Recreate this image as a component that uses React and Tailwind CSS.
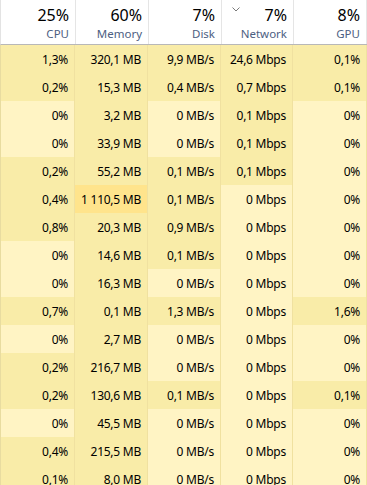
import React from "react";

const columns = [
    { pct: "25%", label: "CPU" },
    { pct: "60%", label: "Memory" },
    { pct: "7%", label: "Disk" },
    { pct: "7%", label: "Network", sorted: true },
    { pct: "8%", label: "GPU" },
];

// heat: 0 = light, 1 = dark, 2 = highlighted
const rows = [
    [["1,3%", 1], ["320,1 MB", 1], ["9,9 MB/s", 1], ["24,6 Mbps", 1], ["0,1%", 1]],
    [["0,2%", 1], ["15,3 MB", 1], ["0,4 MB/s", 1], ["0,7 Mbps", 1], ["0,1%", 1]],
    [["0%", 0], ["3,2 MB", 1], ["0 MB/s", 0], ["0,1 Mbps", 1], ["0%", 0]],
    [["0%", 0], ["33,9 MB", 1], ["0 MB/s", 0], ["0,1 Mbps", 1], ["0%", 0]],
    [["0,2%", 1], ["55,2 MB", 1], ["0,1 MB/s", 1], ["0,1 Mbps", 1], ["0%", 0]],
    [["0,4%", 1], ["1 110,5 MB", 2], ["0,1 MB/s", 1], ["0 Mbps", 0], ["0%", 0]],
    [["0,8%", 1], ["20,3 MB", 1], ["0,9 MB/s", 1], ["0 Mbps", 0], ["0%", 0]],
    [["0%", 0], ["14,6 MB", 1], ["0,1 MB/s", 1], ["0 Mbps", 0], ["0%", 0]],
    [["0%", 0], ["16,3 MB", 1], ["0 MB/s", 0], ["0 Mbps", 0], ["0%", 0]],
    [["0,7%", 1], ["0,1 MB", 1], ["1,3 MB/s", 1], ["0 Mbps", 0], ["1,6%", 1]],
    [["0%", 0], ["2,7 MB", 1], ["0 MB/s", 0], ["0 Mbps", 0], ["0%", 0]],
    [["0,2%", 1], ["216,7 MB", 1], ["0 MB/s", 0], ["0 Mbps", 0], ["0%", 0]],
    [["0,2%", 1], ["130,6 MB", 1], ["0,1 MB/s", 1], ["0 Mbps", 0], ["0,1%", 1]],
    [["0%", 0], ["45,5 MB", 1], ["0 MB/s", 0], ["0 Mbps", 0], ["0%", 0]],
    [["0,4%", 1], ["215,5 MB", 1], ["0 MB/s", 0], ["0 Mbps", 0], ["0%", 0]],
    [["0,1%", 1], ["8,0 MB", 1], ["0 MB/s", 0], ["0 Mbps", 0], ["0%", 0]],
];

const heatClass = ["bg-[#fff4c4]", "bg-[#f9eca8]", "bg-[#ffe48c]"];

function App() {
    return (
        <div
            className="h-[485px] w-[367px] overflow-hidden bg-white text-black"
            style={{ fontFamily: '"Noto Sans", "Open Sans", sans-serif' }}
        >
            {/* Header */}
            <div className="grid grid-cols-[75px_73px_73px_72px_1fr] h-[45px] border-b border-[#b8b8b8] border-l border-l-[#e3e3e3]">
                {columns.map((col) => (
                    <div
                        key={col.label}
                        className="relative flex flex-col items-end border-r border-[#e5e5e5] pr-[6px] pt-[4px]"
                    >
                        {col.sorted && (
                            <svg
                                className="absolute left-[10px] top-[7px]"
                                width="8"
                                height="5"
                                viewBox="0 0 8 5"
                            >
                                <path d="M0.5 0.5 L4 4 L7.5 0.5" fill="none" stroke="#7a7a7a" strokeWidth="1" />
                            </svg>
                        )}
                        <div className="text-[16px] leading-[22px]">{col.pct}</div>
                        <div className="text-[11.5px] leading-[15px] text-[#4d6082]">{col.label}</div>
                    </div>
                ))}
            </div>

            {/* Rows */}
            {rows.map((row, r) => (
                <div key={r} className="grid grid-cols-[75px_73px_73px_72px_1fr] h-[28px]">
                    {row.map(([value, heat], c) => (
                        <div
                            key={c}
                            className={`flex items-center justify-end border-r border-[#f0e1a0] pr-[6px] pt-[2px] text-[12px] tracking-[-0.25px] whitespace-nowrap ${heatClass[heat]} ${c === 0 ? "border-l border-l-[#e8dca0]" : ""}`}
                        >
                            {value}
                        </div>
                    ))}
                </div>
            ))}
        </div>
    );
}

export default App;
